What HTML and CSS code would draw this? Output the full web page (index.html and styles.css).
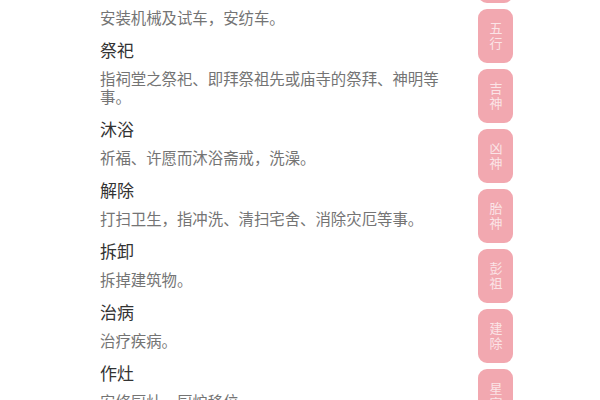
FILE: index.html
```html
<!DOCTYPE html>
<html lang="zh">
<head>
<meta charset="utf-8">
<link rel="stylesheet" href="styles.css">
</head>
<body>
<div class="page">
  <div class="list">
    <div class="item">
      <div class="desc first">安装机械及试车，安纺车。</div>
    </div>
    <div class="item">
      <div class="title">祭祀</div>
      <div class="desc">指祠堂之祭祀、即拜祭祖先或庙寺的祭拜、神明等事。</div>
    </div>
    <div class="item">
      <div class="title">沐浴</div>
      <div class="desc">祈福、许愿而沐浴斋戒，洗澡。</div>
    </div>
    <div class="item">
      <div class="title">解除</div>
      <div class="desc">打扫卫生，指冲洗、清扫宅舍、消除灾厄等事。</div>
    </div>
    <div class="item">
      <div class="title">拆卸</div>
      <div class="desc">拆掉建筑物。</div>
    </div>
    <div class="item">
      <div class="title">治病</div>
      <div class="desc">治疗疾病。</div>
    </div>
    <div class="item">
      <div class="title">作灶</div>
      <div class="desc">安修厨灶、厨炉移位。</div>
    </div>
  </div>
  <div class="tabs">
    <div class="tab"></div>
    <div class="tab"><span class="label">五行</span></div>
    <div class="tab"><span class="label">吉神</span></div>
    <div class="tab"><span class="label">凶神</span></div>
    <div class="tab"><span class="label">胎神</span></div>
    <div class="tab"><span class="label">彭祖</span></div>
    <div class="tab"><span class="label">建除</span></div>
    <div class="tab"><span class="label">星宿</span></div>
  </div>
</div>
</body>
</html>
```

FILE: styles.css
```css
html, body {
  margin: 0;
  padding: 0;
  background: #ffffff;
  overflow: hidden;
}
body {
  width: 600px;
  height: 400px;
  font-family: "Noto Sans CJK SC", "Noto Sans", sans-serif;
}
.page {
  display: flex;
  flex-direction: row;
  align-items: flex-start;
  height: 400px;
  overflow: hidden;
}
.list {
  width: 345px;
  padding-left: 100px;
  padding-top: 8px;
  display: flex;
  flex-direction: column;
}
.item {
  padding-bottom: 12px;
}
.title {
  font-size: 17px;
  line-height: 24px;
  color: #333333;
}
.desc {
  margin-top: 7px;
  font-size: 15.4px;
  line-height: 18px;
  color: #747474;
}
.desc.first {
  margin-top: 0;
}
.tabs {
  margin-left: 33px;
  margin-top: -51px;
  display: flex;
  flex-direction: column;
  gap: 6px;
}
.tab {
  width: 35px;
  height: 54px;
  border-radius: 9px;
  background: #f2a8b0;
  display: flex;
  align-items: center;
  justify-content: center;
}
.label {
  writing-mode: vertical-rl;
  color: #fbe4e7;
  font-size: 13px;
  line-height: 16px;
  letter-spacing: 1.5px;
}
```
